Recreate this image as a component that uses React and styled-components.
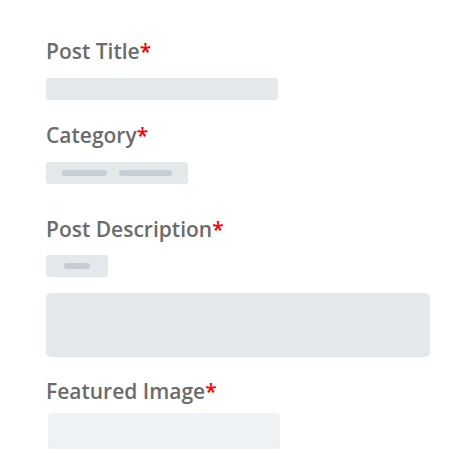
import React from 'react';
import styled, { createGlobalStyle } from 'styled-components';

const GlobalStyle = createGlobalStyle`
  body {
    margin: 0;
    background: #ffffff;
    font-family: "Open Sans", "Liberation Sans", sans-serif;
  }
`;

const Form = styled.div`
  display: flex;
  flex-direction: column;
  align-items: flex-start;
  padding: 37px 42px 0 46px;
`;

const Label = styled.div`
  font-size: 21px;
  line-height: 28px;
  font-weight: 600;
  color: #6b6b6b;
  margin-top: ${p => p.top || 0}px;
  margin-bottom: ${p => p.bottom || 13}px;
`;

const Star = styled.span`
  color: #ff0000;
`;

const Field = styled.div`
  display: flex;
  align-items: center;
  gap: 12px;
  box-sizing: border-box;
  width: ${p => p.w}px;
  height: ${p => p.h}px;
  padding: 0 16px;
  margin-left: ${p => p.shift || 0}px;
  border-radius: ${p => p.r || 3}px;
  background: ${p => p.light ? '#eef2f5' : '#e3e8eb'};
`;

const Pill = styled.span`
  display: block;
  width: ${p => p.w}px;
  height: 6px;
  border-radius: 3px;
  background: #c5ced4;
`;

const Area = styled(Field)`
  width: 100%;
  margin-top: 16px;
`;

function Required({ children, top, bottom }) {
  return (
    <Label top={top} bottom={bottom}>
      {children}<Star>*</Star>
    </Label>
  );
}

export default function App() {
  return (
    <>
      <GlobalStyle />
      <Form>
        <Required>Post Title</Required>
        <Field w={232} h={22} />

        <Required top={21}>Category</Required>
        <Field w={142} h={22}>
          <Pill w={46} />
          <Pill w={54} />
        </Field>

        <Required top={31} bottom={12}>Post Description</Required>
        <Field w={62} h={22} style={{ paddingLeft: 18 }}>
          <Pill w={26} />
        </Field>
        <Area h={64} r={5} />

        <Required top={20} bottom={8}>Featured Image</Required>
        <Field w={232} h={36} r={4} shift={2} light />
      </Form>
    </>
  );
}
